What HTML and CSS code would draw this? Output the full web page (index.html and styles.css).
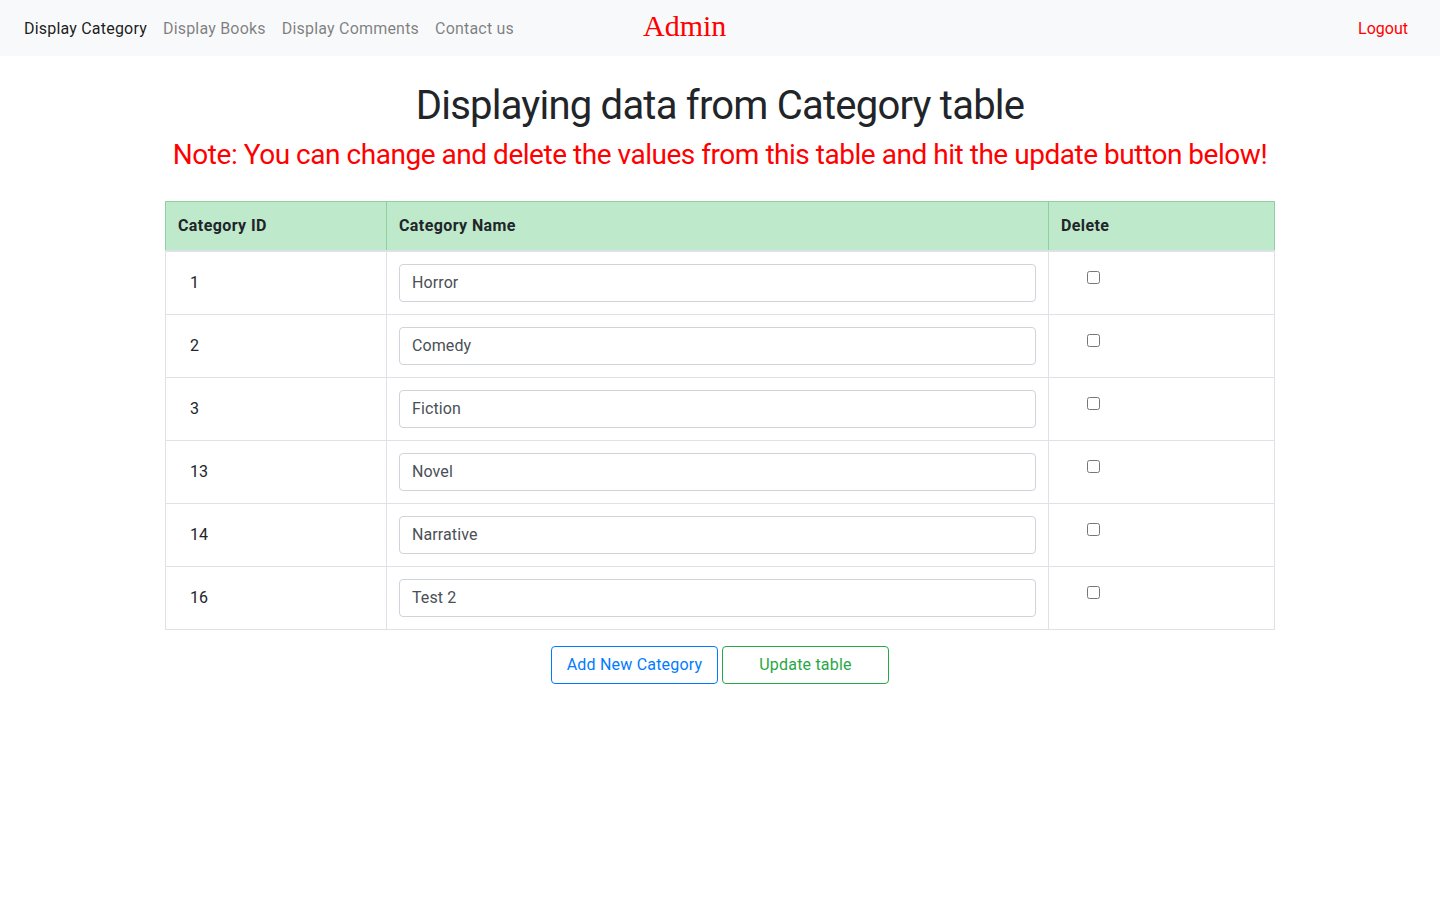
FILE: index.html
```html
<!DOCTYPE html>
<html lang="en">
<head>
<meta charset="utf-8">
<title>Admin - Display Category</title>
<link rel="stylesheet" href="styles.css">
</head>
<body>
<nav class="navbar">
  <ul class="nav-links">
    <li><a class="nav-link active" href="#">Display Category</a></li>
    <li><a class="nav-link" href="#">Display Books</a></li>
    <li><a class="nav-link" href="#">Display Comments</a></li>
    <li><a class="nav-link" href="#">Contact us</a></li>
  </ul>
  <div class="brand">Admin</div>
  <a class="logout" href="#">Logout</a>
</nav>
<main class="container">
  <h1 class="title">Displaying data from Category table</h1>
  <h3 class="note">Note: You can change and delete the values from this table and hit the update button below!</h3>
  <form>
    <table class="table">
      <thead>
        <tr>
          <th class="col-id">Category ID</th>
          <th class="col-name">Category Name</th>
          <th class="col-del">Delete</th>
        </tr>
      </thead>
      <tbody>
        <tr><td><span class="cid">1</span></td><td><input class="form-control" type="text" value="Horror"></td><td><input class="check" type="checkbox"></td></tr>
        <tr><td><span class="cid">2</span></td><td><input class="form-control" type="text" value="Comedy"></td><td><input class="check" type="checkbox"></td></tr>
        <tr><td><span class="cid">3</span></td><td><input class="form-control" type="text" value="Fiction"></td><td><input class="check" type="checkbox"></td></tr>
        <tr><td><span class="cid">13</span></td><td><input class="form-control" type="text" value="Novel"></td><td><input class="check" type="checkbox"></td></tr>
        <tr><td><span class="cid">14</span></td><td><input class="form-control" type="text" value="Narrative"></td><td><input class="check" type="checkbox"></td></tr>
        <tr><td><span class="cid">16</span></td><td><input class="form-control" type="text" value="Test 2"></td><td><input class="check" type="checkbox"></td></tr>
      </tbody>
    </table>
    <div class="actions">
      <button type="button" class="btn btn-blue">Add New Category</button>
      <button type="button" class="btn btn-green">Update table</button>
    </div>
  </form>
</main>
</body>
</html>
```
FILE: styles.css
```css
* { box-sizing: border-box; }
html, body { margin: 0; padding: 0; }
body {
  font-family: "Roboto", "Liberation Sans", sans-serif;
  font-size: 16px;
  line-height: 1.5;
  color: #212529;
  background: #fff;
}
.navbar {
  height: 56px;
  background: #f8f9fa;
  display: flex;
  align-items: center;
  padding: 1px 32px 0 16px;
}
.nav-links {
  list-style: none;
  margin: 0;
  padding: 0;
  display: flex;
  width: 619px;
}
.nav-link {
  display: block;
  padding: 8px 8px;
  text-decoration: none;
  color: rgba(0,0,0,0.5);
  font-size: 16px;
  letter-spacing: 0.2px;
}
.nav-link.active { color: rgba(0,0,0,0.9); }
.brand {
  font-family: "Liberation Serif", "Times New Roman", serif;
  color: #ff0000;
  font-size: 30px;
  line-height: 1;
  margin-left: 8px;
  margin-top: -5px;
}
.logout {
  margin-left: auto;
  color: #ff0000;
  text-decoration: none;
  font-size: 16px;
}
.container {
  width: 1140px;
  margin: 0 auto;
  padding: 0 15px;
}
.title {
  margin: 26px 0 8px;
  font-size: 40px;
  font-weight: 400;
  line-height: 1.2;
  letter-spacing: -0.78px;
  text-align: center;
}
.note {
  margin: 0 0 29px;
  font-size: 28px;
  font-weight: 400;
  line-height: 1.2;
  letter-spacing: -0.47px;
  color: #ff0000;
  text-align: center;
  white-space: nowrap;
}
.table {
  width: 100%;
  border-collapse: collapse;
  margin-bottom: 16px;
}
.table th, .table td {
  border: 1px solid #dee2e6;
  padding: 12px;
  vertical-align: top;
  text-align: left;
}
.table thead th {
  background: #bee9cb;
  border-color: #8fd19e;
  border-bottom: 2px solid #dee2e6;
  font-weight: 700;
  letter-spacing: 0.4px;
  height: 49px;
}
.col-id { width: 221px; }
.col-name { width: 662px; }
.table td { height: 63px; }
.cid {
  display: inline-block;
  padding: 7px 12px 5px;
  line-height: 1.5;
}
.form-control {
  display: block;
  width: 100%;
  height: 38px;
  padding: 6px 12px;
  font-family: inherit;
  font-size: 16px;
  line-height: 1.5;
  letter-spacing: 0.1px;
  color: #495057;
  background: #fff;
  border: 1px solid #ced4da;
  border-radius: 4px;
}
.check {
  margin: 7px 0 0 26px;
  width: 13px;
  height: 13px;
}
.actions {
  text-align: center;
  font-size: 0;
}
.btn {
  display: inline-block;
  vertical-align: middle;
  width: 167px;
  height: 38px;
  margin: 0 2px;
  padding: 6px 4px;
  font-family: inherit;
  font-size: 16px;
  line-height: 1.5;
  letter-spacing: 0.2px;
  white-space: nowrap;
  background: transparent;
  border: 1px solid;
  border-radius: 4px;
  cursor: pointer;
}
.btn-blue { color: #007bff; border-color: #007bff; }
.btn-green { color: #28a745; border-color: #28a745; }
```
